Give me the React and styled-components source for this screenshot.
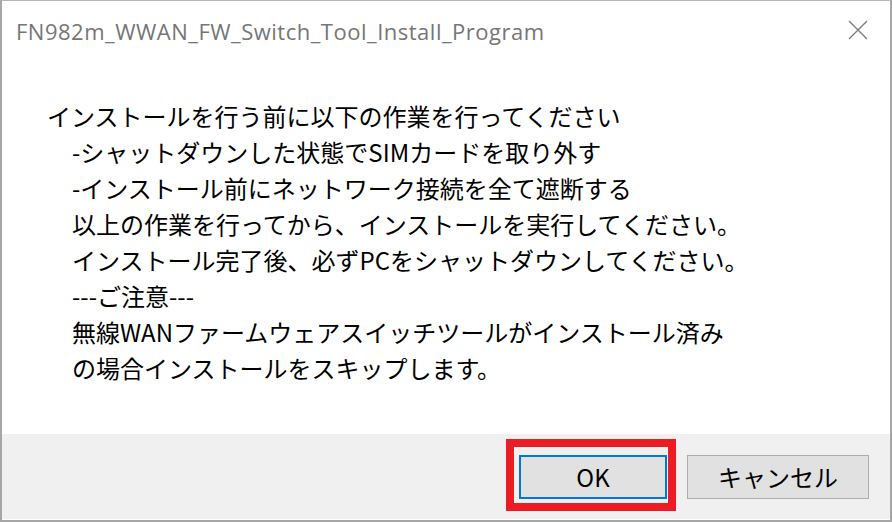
import React from "react";
import styled, { createGlobalStyle } from "styled-components";

const GlobalStyle = createGlobalStyle`
  html, body {
    margin: 0;
    padding: 0;
    background: #ffffff;
  }
  body {
    font-family: "Noto Sans CJK JP", "Noto Sans", sans-serif;
  }
`;

const Window = styled.div`
  width: 892px;
  height: 522px;
  box-sizing: border-box;
  display: flex;
  flex-direction: column;
  background: #ffffff;
  border-top: 1px solid #b4b4b4;
  border-left: 2px solid #a6a6a6;
  border-right: 2px solid #a6a6a6;
  border-bottom: 2px solid #a6a6a6;
`;

const TitleBar = styled.div`
  height: 61px;
  display: flex;
  align-items: center;
  justify-content: space-between;
  padding: 0 22px 0 14px;
`;

const Title = styled.div`
  font-family: "Open Sans", "Noto Sans", sans-serif;
  font-size: 22px;
  color: #767676;
  letter-spacing: 0.5px;
  margin-top: -2px;
`;

const CloseIcon = styled.svg`
  width: 20px;
  height: 20px;
  margin-top: -4px;
`;

const Body = styled.div`
  flex: 1;
  padding: 36px 0 0 45px;
`;

const Line = styled.div`
  font-size: 24px;
  line-height: 36px;
  color: #000000;
  white-space: nowrap;
  padding-left: ${(p) => (p.$indent ? "25px" : "0")};
`;

const Footer = styled.div`
  height: 85px;
  margin-bottom: 1px;
  background: #f0f0f0;
  display: flex;
  align-items: center;
  justify-content: flex-end;
  gap: 20px;
  padding-right: 21px;
`;

const Highlight = styled.span`
  position: relative;
  display: inline-flex;

  &::after {
    content: "";
    position: absolute;
    left: -13px;
    right: -9px;
    top: -16px;
    bottom: -12px;
    border: 8px solid #ed1c24;
    pointer-events: none;
  }
`;

const Button = styled.button`
  height: 44px;
  width: ${(p) => p.$width}px;
  box-sizing: border-box;
  background: #e1e1e1;
  border: ${(p) => (p.$default ? "2px solid #0078d7" : "1px solid #adadad")};
  font-family: "Noto Sans CJK JP", "Noto Sans", sans-serif;
  font-size: 24px;
  color: #000000;
  padding: 0;
  display: flex;
  align-items: center;
  justify-content: center;
`;

const lines = [
  { text: "インストールを行う前に以下の作業を行ってください" },
  { text: "-シャットダウンした状態でSIMカードを取り外す", indent: true },
  { text: "-インストール前にネットワーク接続を全て遮断する", indent: true },
  { text: "以上の作業を行ってから、インストールを実行してください。", indent: true },
  { text: "インストール完了後、必ずPCをシャットダウンしてください。", indent: true },
  { text: "---ご注意---", indent: true },
  { text: "無線WANファームウェアスイッチツールがインストール済み", indent: true },
  { text: "の場合インストールをスキップします。", indent: true },
];

export default function App() {
  return (
    <>
      <GlobalStyle />
      <Window>
        <TitleBar>
          <Title>FN982m_WWAN_FW_Switch_Tool_Install_Program</Title>
          <CloseIcon viewBox="0 0 20 20">
            <path d="M1 1 L19 19 M19 1 L1 19" stroke="#7a7a7a" strokeWidth="1.3" fill="none" />
          </CloseIcon>
        </TitleBar>
        <Body>
          {lines.map((l, i) => (
            <Line key={i} $indent={l.indent}>
              {l.text}
            </Line>
          ))}
        </Body>
        <Footer>
          <Highlight>
            <Button $default $width={148}>OK</Button>
          </Highlight>
          <Button $width={182}>キャンセル</Button>
        </Footer>
      </Window>
    </>
  );
}
